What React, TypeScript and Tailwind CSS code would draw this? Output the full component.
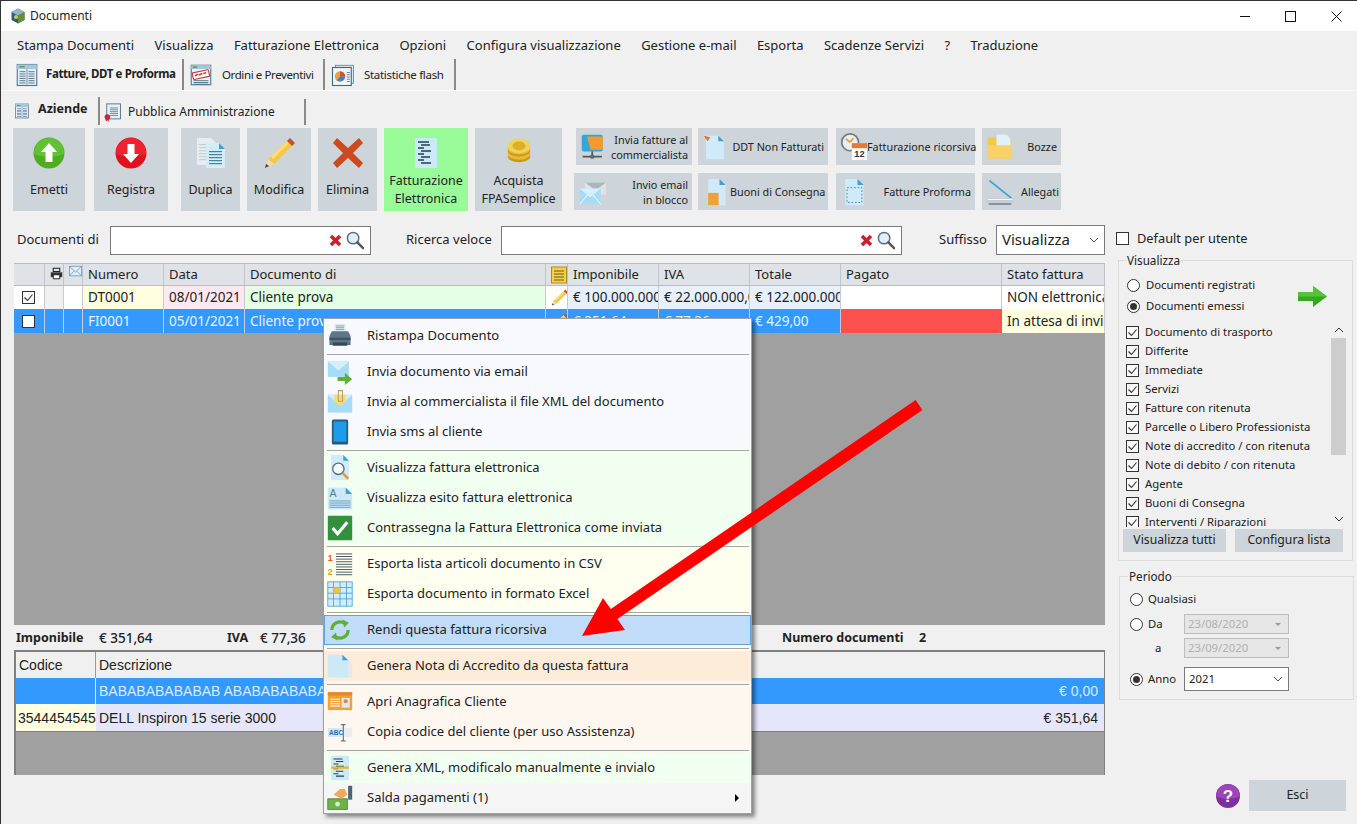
import React from "react";

type I = { s?: number };
const Svg = ({ s = 24, vb = 32, children }: { s?: number; vb?: number; children: React.ReactNode }) => (
  <svg width={s} height={s} viewBox={`0 0 ${vb} ${vb}`} className="shrink-0 block">{children}</svg>
);
const Lines = ({ x, y, w, n, gap = 3, c = "#5a7a90" }: { x: number; y: number; w: number; n: number; gap?: number; c?: string }) => (
  <>{Array.from({ length: n }).map((_, i) => <rect key={i} x={x} y={y + i * gap} width={w} height={1.2} fill={c} />)}</>
);
const Page = ({ x = 7, y = 2, w = 18, h = 28, fill = "#cfeaf8" }: { x?: number; y?: number; w?: number; h?: number; fill?: string }) => (
  <>
    <path d={`M${x} ${y}h${w - 7}l7 7v${h - 7}h-${w}z`} fill={fill} />
    <path d={`M${x + w - 7} ${y}l7 7h-7z`} fill="#3f9fd8" />
  </>
);

const AppLogo = () => (
  <Svg s={16}><path d="M16 1l13 7v16l-13 7-13-7V8z" fill="#2f5f7a" /><path d="M16 1l13 7-13 7L3 8z" fill="#8fb8c8" /><path d="M16 15l13-7v16l-13 7z" fill="#6b8f3a" /><circle cx="12" cy="18" r="4" fill="#d9c36a" /></Svg>
);
const TabDoc = ({ s = 24 }: I) => (
  <Svg s={s}><rect x="3" y="2" width="26" height="28" fill="#e3eef6" stroke="#53788f" strokeWidth="1.5" /><rect x="3" y="2" width="26" height="6" fill="#a9c7da" /><rect x="6" y="4" width="7" height="2" fill="#5a9e4f" /><Lines x={6} y={11} w={8} n={6} gap={3} c="#4d7186" /><Lines x={18} y={11} w={8} n={6} gap={3} c="#4d7186" /><rect x="15.5" y="8" width="1" height="21" fill="#53788f" /></Svg>
);
const TabOrder = () => (
  <Svg s={24}><rect x="3" y="3" width="26" height="26" fill="#eef3f6" stroke="#53788f" strokeWidth="1.5" /><rect x="3" y="3" width="26" height="5" fill="#a9c7da" /><rect x="5" y="4.5" width="6" height="2" fill="#5a9e4f" /><Lines x={6} y={23} w={20} n={3} gap={2.3} c="#4d7186" /><rect x="5" y="11" width="22" height="9" rx="1" transform="rotate(-12 16 16)" fill="#fff" stroke="#c83a3a" strokeWidth="1.5" /><path d="M8 17l4-2M13 16l5-2M19 14l4-1" stroke="#c83a3a" strokeWidth="2" /></Svg>
);
const TabStats = () => (
  <Svg s={24}><rect x="6" y="3" width="24" height="24" fill="#d8e6ee" stroke="#53788f" /><rect x="2" y="6" width="25" height="24" fill="#f2f6f8" stroke="#3e6a85" strokeWidth="1.5" /><circle cx="12" cy="18" r="7" fill="#e8a33a" /><path d="M12 18V11a7 7 0 0 1 7 7z" fill="#d94a3a" /><path d="M12 18h7a7 7 0 0 1-11 5z" fill="#3a7fd9" /><Lines x={21} y={12} w={4} n={5} gap={3} /></Svg>
);
const TabCert = () => (
  <Svg s={20}><rect x="6" y="3" width="22" height="24" fill="#e6eff5" stroke="#53788f" strokeWidth="1.5" /><Lines x={11} y={9} w={13} n={5} gap={3} c="#4d7186" /><circle cx="7" cy="24" r="4.5" fill="#c8263a" /><path d="M4 27l1 4 2-2 2 2 1-4z" fill="#c8263a" /></Svg>
);
const ArrowCircle = ({ up }: { up: boolean }) => (
  <Svg s={32}>
    <circle cx="16" cy="16" r="15.5" fill={up ? "#4fae1f" : "#e0101c"} />
    <path d="M1 16a15 15 0 0 1 30 0c-4 5-26 5-30 0z" fill={up ? "#63c234" : "#ee2230"} />
    {up ? <path d="M16 6l8 9h-4.5v10h-7V15H8z" fill="#fff" /> : <path d="M16 26L8 17h4.5V7h7v10H24z" fill="#fff" />}
  </Svg>
);
const DuplicaIcon = () => (
  <Svg s={32}><path d="M2 1h14l5 5v22H2z" fill="#e7edf1" /><Lines x={4} y={7} w={12} n={6} gap={3} c="#c6d0d6" /><path d="M11 6h13l6 6v19H11z" fill="#d2ecfa" /><path d="M24 6l6 6h-6z" fill="#3f9fd8" /><Lines x={14} y={14} w={13} n={5} gap={3} c="#4d7f9e" /></Svg>
);
const Pencil = ({ s = 32 }: I) => (
  <Svg s={s}><path d="M2 31l3-9L24 4l5 5-18 18z" fill="#f5c745" /><path d="M8 19L24 4l2 2L10 22z" fill="#fbdc7b" /><path d="M24 4l3-3 5 5-3 3z" fill="#c9502b" /><path d="M2 31l3-9 6 5z" fill="#f0d9b5" /><path d="M2 31l1-4 3 2z" fill="#444" /></Svg>
);
const RedX = () => (
  <Svg s={32}><path d="M5 1l11 10L27 1l4 5-10 10 10 10-4 5-11-10L5 31l-4-5 10-10L1 6z" fill="#cd4a1f" /></Svg>
);
const SmallX = () => (
  <svg width="13" height="13" viewBox="0 0 13 13" className="block shrink-0"><path d="M2 2l9 9M11 2l-9 9" stroke="#c8202c" strokeWidth="3.6" /></svg>
);
const XmlDoc = ({ s = 32, band = false }: I & { band?: boolean }) => (
  <Svg s={s}>
    <path d="M5 1h22v30H5z" fill="#cde9f7" />
    <path d="M8 5h11M11 8h9M8 11h6M11 14h10M8 17h6M11 20h9M8 23h6M11 26h10" stroke="#22404f" strokeWidth="1.3" />
    {band && <rect x="5" y="14" width="22" height="3" fill="#f0b43c" />}
  </Svg>
);
const Coins = () => (
  <Svg s={26}>
    <ellipse cx="16" cy="24" rx="14" ry="7" fill="#c99a1e" /><ellipse cx="16" cy="21" rx="14" ry="7" fill="#e8bb35" /><ellipse cx="16" cy="17" rx="14" ry="7" fill="#c99a1e" /><ellipse cx="16" cy="14" rx="14" ry="7.5" fill="#e8bb35" /><ellipse cx="16" cy="11" rx="14" ry="9" fill="#f1d25c" /><ellipse cx="16" cy="11" rx="8" ry="5.5" fill="#dcae2a" />
  </Svg>
);
const Network = () => (
  <Svg s={28}><rect x="2" y="2" width="24" height="19" rx="2" fill="#2fa7dd" /><path d="M8 4h18v15H12z" fill="#f29a2e" /><rect x="13" y="21" width="2" height="5" fill="#555" /><path d="M3 27h22" stroke="#555" strokeWidth="2" /><circle cx="14" cy="27" r="2.5" fill="#666" /></Svg>
);
const DocOrange = ({ s = 26 }: I) => (
  <Svg s={s}><Page x={5} y={2} w={22} h={29} /><path d="M2 2l8 2-3 5z" fill="#e4713a" /></Svg>
);
const CalendarIcon = () => (
  <Svg s={27}><circle cx="12" cy="11" r="10" fill="#e8eef2" stroke="#6d7d87" strokeWidth="2" /><path d="M12 11l4-5M12 11l-5-4" stroke="#e89a2e" strokeWidth="2" /><rect x="14" y="12" width="18" height="20" fill="#fff" /><rect x="14" y="12" width="18" height="6" fill="#e8792e" /><text x="23" y="29" textAnchor="middle" fontSize="11" fontWeight="700" fontFamily="Liberation Sans" fill="#333">12</text></Svg>
);
const Folder = () => (
  <Svg s={28}><path d="M2 5h10l3 3h14v21H2z" fill="#f6c94b" /><path d="M12 2h12l4 5v14H12z" fill="#dff1fb" /><path d="M2 14h27v15H2z" fill="#f8d264" /></Svg>
);
const MailIcon = ({ s = 28 }: I) => (
  <Svg s={s}><path d="M8 5h24v14H8z" fill="#dfe3e6" /><path d="M8 5l12 9 12-9" fill="#aeb6bb" /><path d="M2 12h24v18H2z" fill="#a7dcf7" /><path d="M2 12l12 10 12-10z" fill="#d6effb" /><path d="M2 30l9-11M26 30l-9-11" stroke="#fff" strokeWidth="1" /></Svg>
);
const DocBox = () => (
  <Svg s={28}><Page x={7} y={1} w={20} h={30} /><rect x="7" y="17" width="12" height="14" fill="#f0a13a" /></Svg>
);
const DocDash = () => (
  <Svg s={28}><Page x={6} y={1} w={21} h={30} /><rect x="8" y="11" width="17" height="17" fill="none" stroke="#3f7fb8" strokeDasharray="2 2" /></Svg>
);
const Scanner = () => (
  <Svg s={28}><path d="M4 3l25 20" stroke="#3f9fd8" strokeWidth="2" /><path d="M1 23h30v5H1z" fill="#c5cdd2" /><rect x="2" y="24" width="28" height="1" fill="#fff" /><rect x="3" y="29" width="26" height="1.4" fill="#5e6a72" /></Svg>
);
const MagSmall = () => (
  <svg width="18" height="19" viewBox="0 0 19 20" className="block shrink-0"><circle cx="7.5" cy="7.5" r="6" fill="#dff0fa" stroke="#5f6a72" strokeWidth="1.5" /><path d="M12 12l6 6" stroke="#4d5a63" strokeWidth="2.6" strokeLinecap="round" /></svg>
);
const PrintSmall = () => (
  <svg width="16" height="15" viewBox="0 0 16 15" className="block"><path d="M4 1h8v4H4z" fill="none" stroke="#222" strokeWidth="1.3" /><path d="M1 6h14v6H1z" fill="#333" /><path d="M4 9h8v5H4z" fill="#fff" stroke="#222" strokeWidth="1.2" /></svg>
);
const MailSmall = () => (
  <svg width="15" height="13" viewBox="0 0 15 13" className="block"><rect x="0.5" y="0.5" width="14" height="11" fill="#e2edf5" stroke="#6f9fc8" /><path d="M1 1l6.5 6L14 1M1 11l5-5M14 11l-5-5" fill="none" stroke="#6f9fc8" /></svg>
);
const NoteSmall = () => (
  <svg width="16" height="18" viewBox="0 0 16 18" className="block"><rect x="0.5" y="1" width="15" height="16" fill="#f6cf4a" stroke="#b08a1c" /><path d="M3 5h10M3 8h10M3 11h10M3 14h10" stroke="#6a5a2a" strokeWidth="1" /></svg>
);
const GreenArrow = () => (
  <svg width="29" height="21" viewBox="0 0 29 21" className="block"><path d="M0 6h15V0l14 10.5L15 21v-6H0z" fill="#34a91f" /><path d="M0 6h15V0l14 10.5H0z" fill="#58c13c" /></svg>
);
const Check = () => (
  <span className="w-[13px] h-[13px] border border-[#333] bg-[#f8f8f8] flex items-center justify-center shrink-0">
    <svg width="11" height="11" viewBox="0 0 11 11"><path d="M1.5 5.5L4.5 8.5 9.5 2.5" fill="none" stroke="#333" strokeWidth="1.1" /></svg>
  </span>
);
const Radio = ({ on }: { on?: boolean }) => (
  <span className="w-[13px] h-[13px] rounded-full border border-[#333] bg-white flex items-center justify-center shrink-0">
    {on && <span className="w-[7px] h-[7px] rounded-full bg-[#333]" />}
  </span>
);
const Chevron = ({ c = "#555" }: { c?: string }) => (
  <svg width="10" height="6" viewBox="0 0 10 6" className="block"><path d="M1 1l4 4 4-4" fill="none" stroke={c} /></svg>
);

/* menu icons */
const MPrinter = () => (<Svg s={26}><path d="M9 1h14v10H9z" fill="#dfe9ef" /><Lines x={11} y={3} w={10} n={3} gap={2.2} c="#8fa7b6" /><path d="M3 16l3-6h20l3 6v11H3z" fill="#5e7687" /><rect x="3" y="18" width="26" height="3" fill="#3f5564" /><path d="M7 24h18v4H7z" fill="#33495a" /></Svg>);
const MMailGo = () => (<Svg s={26}><path d="M1 3h26v19H1z" fill="#a7dcf7" /><path d="M1 3l13 11L27 3z" fill="#d6effb" /><path d="M13 22h9v-5l9 8-9 7v-5h-9z" fill="#5fb03a" /></Svg>);
const MMailClip = () => (<Svg s={26}><path d="M1 7h30v22H1z" fill="#a7dcf7" /><path d="M1 7l15 13L31 7z" fill="#d6effb" /><path d="M9 7h14v8l-7 6-7-6z" fill="#f6dd6b" /><path d="M14 2h5v13h-5z" fill="none" stroke="#b6a060" strokeWidth="1.3" /></Svg>);
const MTablet = () => (<Svg s={26}><rect x="6" y="0.5" width="20" height="31" rx="2" fill="#2b5872" /><rect x="8" y="3" width="16" height="25" fill="#1d9cec" /></Svg>);
const MDocSearch = () => (<Svg s={26}><Page x={5} y={0} w={22} h={31} /><circle cx="14" cy="17" r="7" fill="#f4fbff" stroke="#5f6a72" strokeWidth="1.6" /><path d="M19 22l7 7" stroke="#dd9a3a" strokeWidth="3" /></Svg>);
const MDocA = () => (<Svg s={26}><path d="M1 3h22l8 8v19H1z" fill="#cde9f7" /><path d="M23 3l8 8h-8z" fill="#3f9fd8" /><text x="3" y="15" fontSize="13" fill="#4d7f9e" fontFamily="Liberation Sans">A</text><Lines x={3} y={19} w={26} n={4} gap={2.6} c="#6f9fbe" /></Svg>);
const MCheck = () => (<Svg s={26}><rect x="1" y="1" width="30" height="30" rx="1" fill="#33903c" /><path d="M7 16l6 7 12-14" fill="none" stroke="#fff" strokeWidth="4" /></Svg>);
const MList = () => (<Svg s={26}><text x="1" y="12" fontSize="11" fontWeight="700" fill="#e05a2a" fontFamily="Liberation Sans">1</text><text x="1" y="29" fontSize="11" fontWeight="700" fill="#d8a22a" fontFamily="Liberation Sans">2</text><Lines x={11} y={3} w={20} n={9} gap={3.2} c="#4a5a66" /></Svg>);
const MGrid = () => (<Svg s={26}><rect x="1" y="1" width="30" height="30" fill="#d2ecfa" stroke="#3f9fd8" /><path d="M1 8h30M1 15h30M1 22h30M8 1v30M16 1v30M24 1v30" stroke="#3f9fd8" /><rect x="8" y="8" width="8" height="7" fill="#f2c43c" /></Svg>);
const MCycle = () => (<Svg s={26}><path d="M6 16a10 10 0 0 1 16-8" fill="none" stroke="#5fb03a" strokeWidth="4" /><path d="M19 3l8 4-6 6z" fill="#5fb03a" /><path d="M26 16a10 10 0 0 1-16 8" fill="none" stroke="#5fb03a" strokeWidth="4" /><path d="M13 29l-8-4 6-6z" fill="#5fb03a" /></Svg>);
const MNote = () => (<Svg s={26}><path d="M14 6h11l6 6v18H14z" fill="#e6e8ea" /><path d="M1 2h18l7 7v21H1z" fill="#cde9f7" /><path d="M19 2l7 7h-7z" fill="#3f9fd8" /></Svg>);
const MCard = () => (<Svg s={26}><path d="M1 4h30v22H1z" fill="#f0a13a" /><rect x="1" y="4" width="30" height="4" fill="#dd8a2a" /><Lines x={4} y={12} w={12} n={4} gap={2.8} c="#fff" /><rect x="18" y="11" width="10" height="12" fill="#dfe9ef" /><circle cx="23" cy="15" r="2.5" fill="#c98a4a" /></Svg>);
const MAbc = () => (<Svg s={26}><rect x="1" y="11" width="17" height="11" fill="#cde9f7" /><text x="2.5" y="20" fontSize="8" fontWeight="700" fill="#2b6fa8" fontFamily="Liberation Sans">ABC</text><rect x="20" y="11" width="11" height="11" fill="#e8ecef" /><path d="M17 7h6M20 7v20M17 27h6" stroke="#555" strokeWidth="1.2" /></Svg>);
const MMoney = () => (<Svg s={26}><rect x="1" y="17" width="24" height="13" fill="#6fb24a" stroke="#3d7f2a" /><circle cx="13" cy="23.5" r="3" fill="#d8efc8" /><path d="M8 12l8-7 6 0 3 7-7 5z" fill="#f0a85a" /><rect x="26" y="1" width="5" height="17" fill="#4d6472" /></Svg>);

const BigBtn = ({ w, ml, label, icon, green }: { w: string; ml: string; label: string[]; icon: React.ReactNode; green?: boolean }) => (
  <div className={`flex flex-col items-center h-[83px] ${w} ${ml} ${green ? "bg-[#98fb98]" : "bg-[#cdd5da]"}`}>
    <div className="h-[43px] pt-[9px] flex items-start justify-center">{icon}</div>
    <div className="flex flex-col items-center justify-center flex-1 text-[12.5px] leading-[18px] text-center pb-[2px]">
      {label.map((l) => <span key={l} className="whitespace-nowrap">{l}</span>)}
    </div>
  </div>
);
const SmallBtn = ({ w, ml = "", lines, icon, pr = "pr-[4px]" }: { w: string; ml?: string; lines: string[]; icon: React.ReactNode; pr?: string }) => (
  <div className={`bg-[#cdd5da] h-[37px] flex items-center justify-between pl-[4px] ${pr} ${w} ${ml}`}>
    {icon}
    <div className="flex flex-col items-end text-[10.8px] leading-[15px] whitespace-nowrap">
      {lines.map((l) => <span key={l}>{l}</span>)}
    </div>
  </div>
);

const gridCols = "grid grid-cols-[31px_19px_19px_81px_81px_301px_22px_91px_91px_91px_161px_103px]";
const Cell = ({ className = "", children }: { className?: string; children?: React.ReactNode }) => (
  <div className={`h-full flex items-center pl-[5px] overflow-hidden whitespace-nowrap border-r border-[#c8ccd2] ${className}`}>{children}</div>
);
const Head = ({ children, className = "pt-[1px]" }: { children?: React.ReactNode; className?: string }) => (
  <div className={`h-full bg-[#dfe2e6] border-r border-[#c0c4ca] flex items-center pl-[5px] overflow-hidden ${className}`}>{children}</div>
);

const MenuItem = ({ icon, label, className = "", arrow }: { icon: React.ReactNode; label: string; className?: string; arrow?: boolean }) => (
  <div className={`h-[30px] flex items-center pl-[3px] ${className}`}>
    <span className="w-[26px] h-[26px] flex items-center justify-center shrink-0">{icon}</span>
    <span className="ml-[14px] flex-1 whitespace-nowrap">{label}</span>
    {arrow && <span className="w-0 h-0 border-y-[4px] border-y-transparent border-l-[4px] border-l-black mr-[12px]" />}
  </div>
);
const Sep = ({ className }: { className: string }) => (
  <div className={`h-[6px] flex items-center pl-[3px] pr-[2px] ${className}`}><div className="h-px w-full bg-[#a6a6a6]" /></div>
);

const menus = ["Stampa Documenti", "Visualizza", "Fatturazione Elettronica", "Opzioni", "Configura visualizzazione", "Gestione e-mail", "Esporta", "Scadenze Servizi", "?", "Traduzione"];
const listItems = ["Documento di trasporto", "Differite", "Immediate", "Servizi", "Fatture con ritenuta", "Parcelle o Libero Professionista", "Note di accredito / con ritenuta", "Note di debito / con ritenuta", "Agente", "Buoni di Consegna", "Interventi / Riparazioni"];

export default function App() {
  return (
    <div className="relative w-[1357px] h-[824px] overflow-hidden bg-[#f0f0f0] border-t border-l border-[#333] flex flex-col font-['Noto_Sans',sans-serif] text-[13px] text-[#222]">
      {/* title bar */}
      <div className="h-[30px] bg-white flex items-center pl-[9px] shrink-0">
        <AppLogo />
        <span className="ml-[4px] text-[12px]">Documenti</span>
        <div className="ml-auto flex items-center pr-[15px] gap-[35px]">
          <svg width="10" height="10" viewBox="0 0 10 10" className="block"><path d="M0 5.5h10" stroke="#111" /></svg>
          <svg width="11" height="11" viewBox="0 0 11 11" className="block"><rect x="0.5" y="0.5" width="10" height="10" fill="none" stroke="#111" /></svg>
          <svg width="11" height="11" viewBox="0 0 11 11" className="block"><path d="M0.5 0.5l10 10M10.5 0.5l-10 10" stroke="#111" /></svg>
        </div>
      </div>
      {/* menu bar */}
      <div className="h-[28px] flex items-center gap-[20.4px] pl-[16px] pt-[2px] shrink-0 text-[13px]">
        {menus.map((m) => <span key={m} className="whitespace-nowrap">{m}</span>)}
      </div>
      {/* main tabs */}
      <div className="h-[32px] flex pl-[7px] border-b border-[#fafafa] shrink-0 text-[11.5px]">
        <div className="w-[176px] flex items-center pl-[7px] gap-[7px] border-r-2 border-[#8a8a8a] font-bold tracking-[-0.4px] whitespace-nowrap bg-[#f4f4f4]"><TabDoc /><span className="pb-[2px]">Fatture, DDT e Proforma</span></div>
        <div className="w-[141px] flex items-center pl-[5px] gap-[9px] border-r-2 border-[#8a8a8a] tracking-[-0.4px] whitespace-nowrap"><TabOrder /><span>Ordini e Preventivi</span></div>
        <div className="w-[131px] flex items-center pl-[6px] gap-[9px] border-r-2 border-[#8a8a8a] tracking-[-0.3px] whitespace-nowrap"><TabStats /><span>Statistiche flash</span></div>
      </div>
      {/* sub tabs */}
      <div className="h-[28px] mt-[6px] flex pl-[7px] shrink-0">
        <div className="w-[92px] flex items-center pl-[6px] gap-[8px] border-r-2 border-[#8a8a8a] font-bold text-[12.5px]"><TabDoc s={16} /><span className="pb-[4px]">Aziende</span></div>
        <div className="w-[206px] mt-[2px] flex items-center pl-[3px] gap-[5px] border-r-2 border-[#8a8a8a] whitespace-nowrap text-[12px]"><TabCert /><span className="pb-[1px]">Pubblica Amministrazione</span></div>
      </div>
      {/* toolbar */}
      <div className="flex items-start pl-[12px] mt-[3px] shrink-0">
        <BigBtn w="w-[72px]" ml="" label={["Emetti"]} icon={<ArrowCircle up />} />
        <BigBtn w="w-[74px]" ml="ml-[9px]" label={["Registra"]} icon={<ArrowCircle up={false} />} />
        <BigBtn w="w-[59px]" ml="ml-[13px]" label={["Duplica"]} icon={<DuplicaIcon />} />
        <BigBtn w="w-[64px]" ml="ml-[7px]" label={["Modifica"]} icon={<Pencil />} />
        <BigBtn w="w-[59px]" ml="ml-[7px]" label={["Elimina"]} icon={<RedX />} />
        <BigBtn w="w-[84px]" ml="ml-[7px]" green label={["Fatturazione", "Elettronica"]} icon={<XmlDoc />} />
        <BigBtn w="w-[87px]" ml="ml-[7px]" label={["Acquista", "FPASemplice"]} icon={<Coins />} />
        <div className="ml-[12px] flex flex-col gap-[8px]">
          <div className="flex pl-[2px]">
            <SmallBtn w="w-[116px]" lines={["Invia fatture al", "commercialista"]} icon={<Network />} />
            <SmallBtn w="w-[130px]" ml="ml-[6px]" lines={["DDT Non Fatturati"]} icon={<DocOrange />} />
            <SmallBtn w="w-[139px]" ml="ml-[8px]" lines={["Fatturazione ricorsiva"]} icon={<CalendarIcon />} pr="pr-[3px]" />
            <SmallBtn w="w-[79px]" ml="ml-[7px]" lines={["Bozze"]} icon={<Folder />} />
          </div>
          <div className="flex">
            <SmallBtn w="w-[118px]" lines={["Invio email", "in blocco"]} icon={<MailIcon />} />
            <SmallBtn w="w-[130px]" ml="ml-[6px]" lines={["Buoni di Consegna"]} icon={<DocBox />} />
            <SmallBtn w="w-[139px]" ml="ml-[8px]" lines={["Fatture Proforma"]} icon={<DocDash />} />
            <SmallBtn w="w-[79px]" ml="ml-[7px]" lines={["Allegati"]} icon={<Scanner />} pr="pr-[2px]" />
          </div>
        </div>
      </div>
      {/* main */}
      <div className="flex flex-1 mt-[14px] pl-[12px] min-h-0">
        <div className="w-[1092px] shrink-0 flex flex-col">
          {/* search */}
          <div className="h-[30px] flex items-center">
            <span className="ml-[4px] w-[93px]">Documenti di</span>
            <div className="w-[261px] h-[29px] bg-white border border-[#7a7a7a] flex items-center justify-end pr-[6px] gap-[4px]"><SmallX /><MagSmall /></div>
            <span className="ml-[35px] w-[95px]">Ricerca veloce</span>
            <div className="w-[401px] h-[29px] bg-white border border-[#7a7a7a] flex items-center justify-end pr-[6px] gap-[4px]"><SmallX /><MagSmall /></div>
            <span className="ml-[37px] w-[57px]">Suffisso</span>
            <div className="w-[109px] h-[30px] bg-white border border-[#7a7a7a] flex items-center justify-between pl-[5px] pr-[5px] text-[15px]"><span className="pb-[2px]">Visualizza</span><Chevron /></div>
          </div>
          {/* top grid */}
          <div className="mt-[8px] h-[362px] bg-[#a0a0a0] border-t border-[#bcbcbc] flex flex-col ml-[1px]">
            <div className={`${gridCols} h-[21px] text-[13px]`}>
              <Head /><Head className="pl-[2px] items-start pt-[2px]"><PrintSmall /></Head><Head className="pl-[2px] items-start pt-[1px]"><MailSmall /></Head>
              <Head>Numero</Head><Head>Data</Head><Head>Documento di</Head><Head className="pl-[2px]"><NoteSmall /></Head>
              <Head>Imponibile</Head><Head>IVA</Head><Head>Totale</Head><Head>Pagato</Head><Head>Stato fattura</Head>
            </div>
            <div className={`${gridCols} h-[24px] text-[13.5px] bg-white border-t border-[#bcbcbc]`}>
              <Cell className="bg-white pl-[8px]"><Check /></Cell><Cell className="bg-[#f0f0f0]" /><Cell className="bg-white" />
              <Cell className="bg-[#ffffe0]">DT0001</Cell><Cell className="bg-[#ffe8f0]">08/01/2021</Cell><Cell className="bg-[#e4ffe4]">Cliente prova</Cell>
              <Cell className="bg-white pl-[2px]"><Pencil s={17} /></Cell>
              <Cell className="bg-[#e6f0ff]">€ 100.000.000,00</Cell><Cell className="bg-[#e6f0ff]">€ 22.000.000,00</Cell><Cell className="bg-[#e6f0ff]">€ 122.000.000,00</Cell>
              <Cell className="bg-white" /><Cell className="bg-white">NON elettronica</Cell>
            </div>
            <div className={`${gridCols} h-[24px] text-[13.5px] text-[#eaf4ff] bg-[#3399ff]`}>
              <Cell className="pl-[8px] border-[#8cc4ff]"><span className="w-[13px] h-[13px] bg-white border border-[#333]" /></Cell><Cell className="border-[#8cc4ff]" /><Cell className="border-[#8cc4ff]" />
              <Cell className="border-[#8cc4ff]">FI0001</Cell><Cell className="border-[#8cc4ff]">05/01/2021</Cell><Cell className="border-[#8cc4ff]">Cliente prova</Cell>
              <Cell className="pl-[2px] border-[#8cc4ff]"><Pencil s={17} /></Cell>
              <Cell className="border-[#8cc4ff]">€ 351,64</Cell><Cell className="border-[#8cc4ff]">€ 77,36</Cell><Cell className="border-[#8cc4ff]">€ 429,00</Cell>
              <Cell className="bg-[#ff5050] border-[#ff5050]" /><Cell className="bg-[#ffffe0] text-[#222]">In attesa di invio</Cell>
            </div>
          </div>
          {/* summary */}
          <div className="h-[25px] flex items-center pt-[2px] whitespace-nowrap">
            <b className="ml-[3px] w-[83px] text-[12.5px]">Imponibile</b><span className="w-[128px] font-medium text-[13.5px]">€ 351,64</span>
            <b className="w-[33px] text-[12.5px]">IVA</b><span className="w-[522px] font-medium text-[13.5px]">€ 77,36</span>
            <b className="w-[137px] text-[12.5px]">Numero documenti</b><b className="text-[12.5px]">2</b>
          </div>
          {/* lower grid */}
          <div className="ml-[1px] h-[125px] bg-[#a0a0a0] border-t-2 border-l-2 border-r border-[#7f7f7f] flex flex-col font-['Liberation_Sans',sans-serif] text-[14px]">
            <div className="h-[26px] bg-[#f0f0f0] flex">
              <div className="w-[80px] pl-[3px] flex items-center border-r border-[#999]">Codice</div>
              <div className="flex-1 pl-[3px] flex items-center">Descrizione</div>
            </div>
            <div className="h-[26px] bg-[#3399ff] text-[#d8ecff] flex">
              <div className="w-[80px] border-r border-[#d8ecff]" />
              <div className="flex-1 pl-[3px] flex items-center justify-between pr-[6px]"><span>BABABABABABAB ABABABABABA</span><span>€ 0,00</span></div>
            </div>
            <div className="h-[28px] bg-[#e6e6fa] flex border-b border-[#7f7f7f]">
              <div className="w-[80px] bg-[#ffffe0] pl-[2px] pt-[2px] flex items-center overflow-hidden whitespace-nowrap">354445454545</div>
              <div className="flex-1 pl-[3px] pt-[2px] flex items-center justify-between pr-[6px]"><span>DELL Inspiron 15 serie 3000</span><span>€ 351,64</span></div>
            </div>
          </div>
        </div>
        {/* right column */}
        <div className="flex-1 flex flex-col pl-[10px] text-[11.3px]">
          <div className="h-[26px] flex items-center pt-[1px]">
            <span className="w-[13px] h-[13px] border border-[#333] bg-white ml-[1px]" />
            <span className="ml-[8px] text-[12.8px]">Default per utente</span>
          </div>
          <fieldset className="mt-[1px] ml-[3px] w-[235px] border border-[#dcdcdc] px-[4px] pb-[8px]">
            <legend className="ml-[3px] px-[1px] h-[16px] leading-[16px] text-[11.7px]">Visualizza</legend>
            <div className="flex items-center justify-between pr-[21px] pt-[7px]">
              <div className="flex flex-col">
                <div className="h-[21px] flex items-center gap-[6px] pl-[4px]"><Radio /><span>Documenti registrati</span></div>
                <div className="h-[21px] flex items-center gap-[6px] pl-[4px]"><Radio on /><span>Documenti emessi</span></div>
              </div>
              <GreenArrow />
            </div>
            <div className="mt-[5px] h-[205px] flex overflow-hidden">
              <div className="flex-1 pl-[3px] overflow-hidden pt-[1px]">
                {listItems.map((t) => (
                  <div key={t} className="h-[19px] flex items-center gap-[6px] whitespace-nowrap"><Check /><span>{t}</span></div>
                ))}
              </div>
              <div className="w-[15px] flex flex-col items-center mr-[2px]">
                <div className="h-[16px] flex items-center"><span className="block rotate-180"><Chevron c="#333" /></span></div>
                <div className="w-full h-[117px] bg-[#cdcdcd]" />
                <div className="mt-auto h-[16px] flex items-center"><Chevron c="#333" /></div>
              </div>
            </div>
            <div className="mt-[2px] flex gap-[9px] text-[12.2px]">
              <div className="w-[103px] h-[23px] bg-[#cdd5da] flex items-center justify-center">Visualizza tutti</div>
              <div className="w-[108px] h-[23px] bg-[#cdd5da] flex items-center justify-center">Configura lista</div>
            </div>
          </fieldset>
          <fieldset className="mt-[7px] ml-[4px] w-[235px] border border-[#dcdcdc] pl-[10px] pb-[8px]">
            <legend className="ml-[-2px] px-[1px] h-[16px] leading-[16px] text-[11.7px]">Periodo</legend>
            <div className="pt-[5px] h-[25px] flex items-center gap-[5px]"><Radio /><span>Qualsiasi</span></div>
            <div className="mt-[5px] h-[20px] flex items-center"><Radio /><span className="ml-[5px] w-[36px]">Da</span><div className="w-[105px] h-[20px] bg-[#e6e6e6] border border-[#bdbdbd] flex items-center justify-between pl-[3px] pr-[7px] text-[#b0b0b0]"><span>23/08/2020</span><span className="w-0 h-0 border-x-[3px] border-x-transparent border-t-[3px] border-t-[#999]" /></div></div>
            <div className="mt-[4px] h-[20px] flex items-center"><span className="ml-[25px] w-[29px]">a</span><div className="w-[105px] h-[20px] bg-[#e6e6e6] border border-[#bdbdbd] flex items-center justify-between pl-[3px] pr-[7px] text-[#b0b0b0]"><span>23/09/2020</span><span className="w-0 h-0 border-x-[3px] border-x-transparent border-t-[3px] border-t-[#999]" /></div></div>
            <div className="mt-[9px] h-[24px] flex items-center"><Radio on /><span className="ml-[5px] w-[36px]">Anno</span><div className="w-[105px] h-[24px] bg-white border border-[#7a7a7a] flex items-center justify-between pl-[4px] pr-[5px]"><span>2021</span><Chevron /></div></div>
          </fieldset>
          <div className="mt-auto mb-[13px] flex items-center justify-end gap-[9px] pr-[11px]">
            <svg width="24" height="24" viewBox="0 0 24 24" className="block"><circle cx="12" cy="12" r="12" fill="#7d2f9e" /><path d="M0 12a12 12 0 0 1 24 0c-6 4-18 4-24 0z" fill="#9a45b8" /><text x="12" y="18" textAnchor="middle" fontSize="17" fontWeight="700" fill="#fff" fontFamily="Liberation Sans">?</text></svg>
            <div className="w-[97px] h-[31px] bg-[#cdd5da] flex items-center justify-center text-[12.5px]">Esci</div>
          </div>
        </div>
      </div>

      {/* context menu */}
      <div className="absolute left-[322px] top-[317px] w-[429px] border border-[#a0a0a0] bg-[#f8f8ff] shadow-[3px_3px_4px_rgba(0,0,0,0.45)] text-[13px] pt-[2px]">
        <MenuItem icon={<MPrinter />} label="Ristampa Documento" />
        <Sep className="bg-[#f8f8ff]" />
        <MenuItem icon={<MMailGo />} label="Invia documento via email" />
        <MenuItem icon={<MMailClip />} label="Invia al commercialista il file XML del documento" />
        <MenuItem icon={<MTablet />} label="Invia sms al cliente" />
        <Sep className="bg-[#f4fcf4]" />
        <MenuItem className="bg-[#f0fff0]" icon={<MDocSearch />} label="Visualizza fattura elettronica" />
        <MenuItem className="bg-[#f0fff0]" icon={<MDocA />} label="Visualizza esito fattura elettronica" />
        <MenuItem className="bg-[#f0fff0]" icon={<MCheck />} label="Contrassegna la Fattura Elettronica come inviata" />
        <Sep className="bg-[#f8fff0]" />
        <MenuItem className="bg-[#fffff0]" icon={<MList />} label="Esporta lista articoli documento in CSV" />
        <MenuItem className="bg-[#fffff0]" icon={<MGrid />} label="Esporta documento in formato Excel" />
        <Sep className="bg-[#fffff0]" />
        <MenuItem className="bg-[#c0dcf8] outline outline-1 outline-[#5ca4e0] -outline-offset-1" icon={<MCycle />} label="Rendi questa fattura ricorsiva" />
        <Sep className="bg-[#fff8f0]" />
        <MenuItem className="bg-[#fdecd9]" icon={<MNote />} label="Genera Nota di Accredito da questa fattura" />
        <Sep className="bg-[#fef7f0]" />
        <MenuItem className="bg-[#fef7f0]" icon={<MCard />} label="Apri Anagrafica Cliente" />
        <MenuItem className="bg-[#fef7f0]" icon={<MAbc />} label="Copia codice del cliente (per uso Assistenza)" />
        <Sep className="bg-[#f8f8f0]" />
        <MenuItem className="bg-[#f0fff0]" icon={<XmlDoc s={26} band />} label="Genera XML, modificalo manualmente e invialo" />
        <MenuItem className="bg-[#f5f5f5]" icon={<MMoney />} label="Salda pagamenti (1)" arrow />
      </div>

      {/* red annotation arrow */}
      <svg className="absolute left-[-1px] top-[-1px] pointer-events-none" width="1357" height="824" viewBox="0 0 1357 824">
        <path d="M582 636L603 598 610.8 609 915.6 400 922.4 410 617.4 619 625 630z" fill="#fe0000" />
      </svg>
    </div>
  );
}
